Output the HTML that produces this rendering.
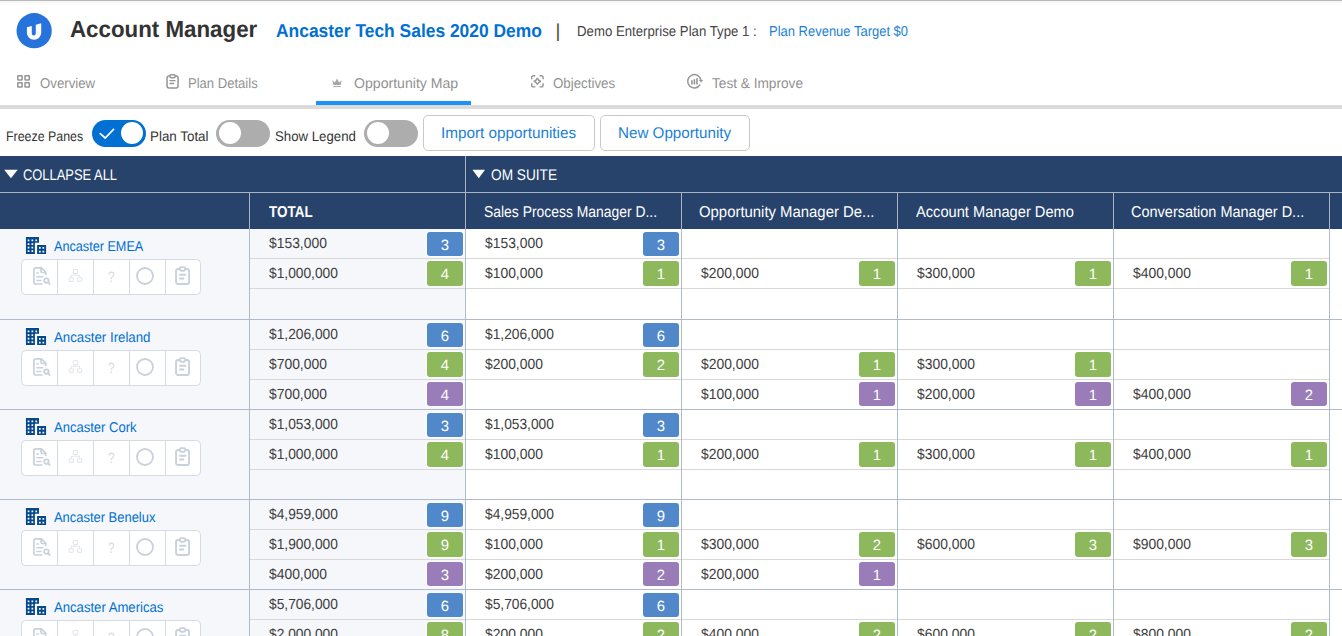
<!DOCTYPE html>
<html lang="en"><head><meta charset="utf-8"><title>Account Manager - Opportunity Map</title>
<style>
html,body{margin:0;padding:0}
body{width:1342px;height:636px;overflow:hidden;background:#fff;font-family:"Liberation Sans",sans-serif;position:relative;color:#333;text-rendering:geometricPrecision}
.t{position:absolute;white-space:nowrap;line-height:1;display:block;transform-origin:0 0}
.a{position:absolute;display:block}
svg{position:absolute;display:block;overflow:visible}
.tog{position:absolute;width:54px;height:27px;border-radius:14px;top:119.9px}
.tog i{position:absolute;display:block;width:22.2px;height:22.2px;border-radius:12px;background:#fff;top:1.9px}
.btn{position:absolute;top:115px;height:34px;border:1px solid #c9c9c9;border-radius:5px;background:#fff}
.hl{position:absolute;height:1px;background:#d8d8d8}
.gl{position:absolute;height:1px;background:#b0bac9;left:0;width:1342px}
.vl{position:absolute;width:1px;background:#b0bac9}
.bd{position:absolute;width:36px;height:24px;border-radius:3px;color:#fff;font-size:14.9px;line-height:28px;text-align:center;box-shadow:0 0 0 1px rgba(255,255,255,.7)}
.b1{background:#5088ca}.b2{background:#8db85c}.b3{background:#9a7cb8}
.bg{position:absolute;left:21px;width:178px;height:34px;border:1px solid #d5dbe5;border-radius:4.5px;background:#fff}
.bg b{position:absolute;top:0;width:1px;height:34px;background:#d5dbe5}
</style></head><body>

<div class="a" style="left:0;top:0;width:1342px;height:5px;background:linear-gradient(#f1f1f1,#fff)"></div>
<div class="a" style="left:0;top:0;width:1342px;height:1px;background:#b9b9b9"></div>
<svg style="left:16px;top:13px" width="37" height="36" viewBox="0 0 37 36"><g transform="translate(0.5,0.05)"><circle cx="17.65" cy="17.65" r="17.65" fill="#2673dc"/><path d="M10.4 14.3L15.3 12.9V20.4A2 2 0 0 0 19.3 20.4V11.75L24.7 10.2V19.6A7.15 7.15 0 0 1 10.4 19.6Z" fill="#fff"/></g></svg>
<span class="t" style="left:69.84px;top:16px;font-size:23.40px;line-height:26px;color:#333;transform:scaleX(0.9540);font-weight:bold;">Account Manager</span>
<span class="t" style="left:276.26px;top:20px;font-size:18.60px;line-height:21px;color:#0070d2;transform:scaleX(0.9367);font-weight:bold;">Ancaster Tech Sales 2020 Demo</span>
<span class="t" style="left:555.4px;top:20px;font-size:18.8px;line-height:21px;color:#4a4a4a">|</span>
<span class="t" style="left:576.94px;top:24px;font-size:14.40px;line-height:16px;color:#444;transform:scaleX(0.9183);">Demo Enterprise Plan Type 1 :</span>
<span class="t" style="left:768.76px;top:24px;font-size:14.40px;line-height:16px;color:#1b7fd6;transform:scaleX(0.9021);">Plan Revenue Target $0</span>
<span class="t" style="left:39.60px;top:76px;font-size:14.20px;line-height:16px;color:#919191;transform:scaleX(0.9321);">Overview</span>
<span class="t" style="left:187.85px;top:76px;font-size:14.20px;line-height:16px;color:#919191;transform:scaleX(0.9201);">Plan Details</span>
<span class="t" style="left:353.87px;top:76px;font-size:14.20px;line-height:16px;color:#919191;transform:scaleX(0.9936);">Opportunity Map</span>
<span class="t" style="left:553.30px;top:76px;font-size:14.20px;line-height:16px;color:#919191;transform:scaleX(0.9379);">Objectives</span>
<span class="t" style="left:711.83px;top:76px;font-size:14.20px;line-height:16px;color:#919191;transform:scaleX(0.9617);">Test &amp; Improve</span>
<div class="a" style="left:0;top:105px;width:1342px;height:3.5px;background:#dddbda"></div>
<div class="a" style="left:316px;top:101px;width:155px;height:4px;background:#1b92f8"></div>
<svg style="left:17px;top:74px" width="15" height="15" viewBox="0 0 15 15" fill="none" stroke="#959595" stroke-width="1.5"><g transform="translate(0.05,0.95)"><rect x="0.75" y="0.75" width="4.3" height="4.3" rx="0.4"/><rect x="7.95" y="0.75" width="4.3" height="4.3" rx="0.4"/><rect x="0.75" y="7.85" width="4.3" height="4.3" rx="0.4"/><rect x="7.95" y="7.85" width="4.3" height="4.3" rx="0.4"/></g></svg>
<svg style="left:166px;top:73px" width="14" height="17" viewBox="0 0 14 17" fill="none" stroke="#959595" stroke-width="1.5"><g transform="translate(0.30,0.90)"><rect x="0.75" y="2.1" width="11" height="12.1" rx="2"/><rect x="3.6" y="0.75" width="5.3" height="3" rx="1.3" fill="#fff"/><path d="M3.2 6.7h6M3.2 9.6h4.6" stroke-width="1.3"/></g></svg>
<svg style="left:331px;top:78px" width="13" height="11" viewBox="0 0 13 11"><g transform="translate(0.90,0.00)"><path d="M1.4 6.9L0.4 2.2L3 4.5L5.1 0.5L7.2 4.5L9.8 2.2L8.8 6.9Z" fill="#a6a6a6"/><path d="M1.4 8.5h7.4" stroke="#a2a2a2" stroke-width="0.9" fill="none"/></g></svg>
<svg style="left:531px;top:75px" width="14" height="14" viewBox="0 0 14 14" fill="none" stroke="#959595" stroke-width="1.4"><g transform="translate(0.00,0.00)"><path d="M0.7 4.3V2.7Q0.7 0.7 2.7 0.7H4.3M8.5 0.7H10.1Q12.1 0.7 12.1 2.7V4.3M12.1 8.3V9.9Q12.1 11.9 10.1 11.9H8.5M4.3 11.9H2.7Q0.7 11.9 0.7 9.9V8.3"/><path d="M6.4 3Q7 5.6 9.9 6.3Q7 7 6.4 9.6Q5.7 7 2.8 6.3Q5.7 5.6 6.4 3Z" stroke-width="1.3"/></g></svg>
<svg style="left:687px;top:74px" width="18" height="16" viewBox="0 0 18 16" fill="none" stroke="#959595" stroke-width="1.5"><g transform="translate(0.00,0.00)"><path d="M13.9 6.2A6.65 6.65 0 1 0 13.1 10.6"/><path d="M11.9 6H16.2L14 8.6Z" fill="#959595" stroke="none"/><path d="M4.9 10.6V6.3M7.4 10.6V5.3M10 10.6V4.3" stroke-width="1.6"/></g></svg>
<span class="t" style="left:5.71px;top:128px;font-size:14.00px;line-height:16px;color:#333;transform:scaleX(0.8850);">Freeze Panes</span>
<span class="t" style="left:149.73px;top:128px;font-size:14.00px;line-height:16px;color:#333;transform:scaleX(0.9558);">Plan Total</span>
<span class="t" style="left:275.01px;top:128px;font-size:14.00px;line-height:16px;color:#333;transform:scaleX(0.9441);">Show Legend</span>
<div class="tog" style="left:92px;background:#0070d2"><i style="left:28.9px"></i><svg style="left:0;top:0" width="54" height="27" viewBox="0 0 54 27" fill="none" stroke="#fff" stroke-width="1.7"><path d="M7.7 13.1L13.2 18L22 8.9"/></svg></div>
<div class="tog" style="left:216px;background:#adadad"><i style="left:2.7px"></i></div>
<div class="tog" style="left:364px;background:#adadad"><i style="left:2.7px"></i></div>
<div class="btn" style="left:423px;width:170px"></div>
<div class="btn" style="left:600px;width:148px"></div>
<span class="t" style="left:441.42px;top:125px;font-size:15.50px;line-height:17px;color:#1b7fd6;transform:scaleX(0.9863);">Import opportunities</span>
<span class="t" style="left:617.98px;top:125px;font-size:15.50px;line-height:17px;color:#1b7fd6;transform:scaleX(0.9799);">New Opportunity</span>
<div class="a" style="left:0;top:156px;width:1342px;height:73px;background:#27436b"></div>
<div class="a" style="left:0;top:192px;width:1342px;height:1px;background:#a9b4c4"></div>
<div class="a" style="left:465px;top:156px;width:1px;height:73px;background:#a9b4c4"></div>
<div class="a" style="left:249px;top:192px;width:1px;height:37px;background:#a9b4c4"></div>
<div class="a" style="left:681px;top:192px;width:1px;height:37px;background:#a9b4c4"></div>
<div class="a" style="left:897px;top:192px;width:1px;height:37px;background:#a9b4c4"></div>
<div class="a" style="left:1113px;top:192px;width:1px;height:37px;background:#a9b4c4"></div>
<div class="a" style="left:1329px;top:192px;width:1px;height:37px;background:#a9b4c4"></div>
<svg style="left:4px;top:169px" width="15" height="11" viewBox="0 0 15 11"><g transform="translate(0.20,0.80)"><path d="M0 0H13.5L6.75 8.5Z" fill="#fff"/></g></svg>
<svg style="left:472px;top:169px" width="14" height="11" viewBox="0 0 14 11"><g transform="translate(0.50,0.80)"><path d="M0 0H12.5L6.25 8.5Z" fill="#fff"/></g></svg>
<span class="t" style="left:23.15px;top:167px;font-size:15.40px;line-height:17px;color:#fff;transform:scaleX(0.8387);">COLLAPSE ALL</span>
<span class="t" style="left:490.68px;top:167px;font-size:15.40px;line-height:17px;color:#fff;transform:scaleX(0.8877);">OM SUITE</span>
<span class="t" style="left:268.77px;top:204px;font-size:15.80px;line-height:17px;color:#fff;transform:scaleX(0.8518);font-weight:bold;">TOTAL</span>
<span class="t" style="left:483.87px;top:204px;font-size:15.70px;line-height:17px;color:#fff;transform:scaleX(0.8860);">Sales Process Manager D...</span>
<span class="t" style="left:699.33px;top:204px;font-size:15.70px;line-height:17px;color:#fff;transform:scaleX(0.9491);">Opportunity Manager De...</span>
<span class="t" style="left:916.00px;top:204px;font-size:15.70px;line-height:17px;color:#fff;transform:scaleX(0.9333);">Account Manager Demo</span>
<span class="t" style="left:1131.27px;top:204px;font-size:15.70px;line-height:17px;color:#fff;transform:scaleX(0.9239);">Conversation Manager D...</span>
<div class="a" style="left:0;top:229px;width:465px;height:407px;background:#f5f7fb"></div>
<svg style="left:25px;top:237px" width="23" height="18" viewBox="0 0 23 18"><g transform="translate(0.90,0.10)"><path fill="#05488c" stroke="#fff" stroke-width="1.6" stroke-linejoin="round" d="M0 0H13.1V5.7H9V16.8H0Z M11.2 8H20.2V16.8H11.2Z"/><path fill="#05488c" d="M0 0H13.1V5.7H9V16.8H0Z M11.2 8H20.2V16.8H11.2Z"/><path fill="#fff" d="M1.8 2.5h1.7v1.7H1.8Z M5.6 2.5h1.7v1.7H5.6Z M9.5 2.5h1.7v1.7H9.5Z M1.8 6.1h1.7v1.7H1.8Z M5.6 6.1h1.7v1.7H5.6Z M1.8 9.6h1.7v1.7H1.8Z M5.6 9.6h1.7v1.7H5.6Z M1.8 13.2h1.7v1.7H1.8Z M5.6 13.2h1.7v1.7H5.6Z M13.1 10h1.7v1.7h-1.7Z M16.6 10h1.7v1.7h-1.7Z M13.1 13.6h1.7v1.7h-1.7Z M16.6 13.6h1.7v1.7h-1.7Z"/></g></svg>
<span class="t" style="left:53.50px;top:239px;font-size:14.20px;line-height:16px;color:#0070d2;transform:scaleX(0.8914);">Ancaster EMEA</span>
<div class="bg" style="top:259px"><b style="left:35px"></b><b style="left:71px"></b><b style="left:107px"></b><b style="left:143px"></b><svg style="left:11px;top:6px" width="19" height="20" viewBox="0 0 19 20" fill="none" stroke="#c9d1dc" stroke-width="1.7" stroke-linecap="round" stroke-linejoin="round"><g transform="translate(0.00,0.90)"><path d="M12.7 7.6V5.2L8.4 0.9H2.7Q0.9 0.9 0.9 2.7V15.3Q0.9 17.1 2.7 17.1H8.8"/><path d="M8 1.2V4.2Q8 5.6 9.4 5.6H12.4"/><path d="M3.9 6.2h1.4M3.9 9.8h5.9M3.9 13.5h4.1" stroke-width="1.5"/><circle cx="13.4" cy="13.7" r="2.3"/><path d="M15.2 15.5L16.7 17.2"/></g></svg><svg style="left:46px;top:9px" width="16" height="14" viewBox="0 0 16 14" fill="none" stroke="#e4e7eb" stroke-width="1.1"><g transform="translate(0.60,0.00)"><rect x="4.6" y="0.55" width="4.4" height="4" rx="0.8"/><rect x="0.55" y="8.7" width="4.2" height="3.7" rx="0.8"/><rect x="8.85" y="8.7" width="4.2" height="3.7" rx="0.8"/><path d="M6.8 4.6V6.3M2.65 8.7V6.3H10.95V8.7"/></g></svg><span class="t" style="left:85.93px;top:9px;font-size:15.00px;line-height:17px;color:#dadada;transform:scaleX(0.7778);">?</span><svg style="left:114px;top:7px" width="19" height="19" viewBox="0 0 19 19" fill="none" stroke="#c9d1dc" stroke-width="1.8"><g transform="translate(0.10,0.10)"><circle cx="8.9" cy="8.9" r="8"/></g></svg><svg style="left:153px;top:6px" width="16" height="20" viewBox="0 0 16 20" fill="none" stroke="#c9d1dc" stroke-width="1.9" stroke-linejoin="round"><g transform="translate(0.10,0.20)"><rect x="0.95" y="2.8" width="13" height="15" rx="2"/><rect x="4.8" y="0.9" width="5.3" height="3.6" rx="1.2" fill="#fff"/><path d="M4.1 8.6h7M4.1 12.3h5" stroke-linecap="butt"/></g></svg></div>
<div class="hl" style="left:250px;top:258px;width:1079px"></div>
<span class="t" style="left:268.66px;top:236px;font-size:14.70px;line-height:16px;color:#3d3d3d;transform:scaleX(0.9448);">$153,000</span>
<span class="bd b1" style="left:427px;top:232px;height:24px">3</span>
<span class="t" style="left:484.66px;top:236px;font-size:14.70px;line-height:16px;color:#3d3d3d;transform:scaleX(0.9448);">$153,000</span>
<span class="bd b1" style="left:643px;top:232px;height:24px">3</span>
<div class="hl" style="left:250px;top:288px;width:1079px"></div>
<span class="t" style="left:268.66px;top:266px;font-size:14.70px;line-height:16px;color:#3d3d3d;transform:scaleX(0.9374);">$1,000,000</span>
<span class="bd b2" style="left:427px;top:261px;height:25px">4</span>
<span class="t" style="left:484.66px;top:266px;font-size:14.70px;line-height:16px;color:#3d3d3d;transform:scaleX(0.9448);">$100,000</span>
<span class="bd b2" style="left:643px;top:261px;height:25px">1</span>
<span class="t" style="left:700.66px;top:266px;font-size:14.70px;line-height:16px;color:#3d3d3d;transform:scaleX(0.9448);">$200,000</span>
<span class="bd b2" style="left:859px;top:261px;height:25px">1</span>
<span class="t" style="left:916.66px;top:266px;font-size:14.70px;line-height:16px;color:#3d3d3d;transform:scaleX(0.9448);">$300,000</span>
<span class="bd b2" style="left:1075px;top:261px;height:25px">1</span>
<span class="t" style="left:1132.66px;top:266px;font-size:14.70px;line-height:16px;color:#3d3d3d;transform:scaleX(0.9448);">$400,000</span>
<span class="bd b2" style="left:1291px;top:261px;height:25px">1</span>
<div class="gl" style="top:319px"></div>
<svg style="left:25px;top:328px" width="23" height="18" viewBox="0 0 23 18"><g transform="translate(0.90,0.10)"><path fill="#05488c" stroke="#fff" stroke-width="1.6" stroke-linejoin="round" d="M0 0H13.1V5.7H9V16.8H0Z M11.2 8H20.2V16.8H11.2Z"/><path fill="#05488c" d="M0 0H13.1V5.7H9V16.8H0Z M11.2 8H20.2V16.8H11.2Z"/><path fill="#fff" d="M1.8 2.5h1.7v1.7H1.8Z M5.6 2.5h1.7v1.7H5.6Z M9.5 2.5h1.7v1.7H9.5Z M1.8 6.1h1.7v1.7H1.8Z M5.6 6.1h1.7v1.7H5.6Z M1.8 9.6h1.7v1.7H1.8Z M5.6 9.6h1.7v1.7H5.6Z M1.8 13.2h1.7v1.7H1.8Z M5.6 13.2h1.7v1.7H5.6Z M13.1 10h1.7v1.7h-1.7Z M16.6 10h1.7v1.7h-1.7Z M13.1 13.6h1.7v1.7h-1.7Z M16.6 13.6h1.7v1.7h-1.7Z"/></g></svg>
<span class="t" style="left:53.50px;top:330px;font-size:14.20px;line-height:16px;color:#0070d2;transform:scaleX(0.9338);">Ancaster Ireland</span>
<div class="bg" style="top:350px"><b style="left:35px"></b><b style="left:71px"></b><b style="left:107px"></b><b style="left:143px"></b><svg style="left:11px;top:6px" width="19" height="20" viewBox="0 0 19 20" fill="none" stroke="#c9d1dc" stroke-width="1.7" stroke-linecap="round" stroke-linejoin="round"><g transform="translate(0.00,0.90)"><path d="M12.7 7.6V5.2L8.4 0.9H2.7Q0.9 0.9 0.9 2.7V15.3Q0.9 17.1 2.7 17.1H8.8"/><path d="M8 1.2V4.2Q8 5.6 9.4 5.6H12.4"/><path d="M3.9 6.2h1.4M3.9 9.8h5.9M3.9 13.5h4.1" stroke-width="1.5"/><circle cx="13.4" cy="13.7" r="2.3"/><path d="M15.2 15.5L16.7 17.2"/></g></svg><svg style="left:46px;top:9px" width="16" height="14" viewBox="0 0 16 14" fill="none" stroke="#e4e7eb" stroke-width="1.1"><g transform="translate(0.60,0.00)"><rect x="4.6" y="0.55" width="4.4" height="4" rx="0.8"/><rect x="0.55" y="8.7" width="4.2" height="3.7" rx="0.8"/><rect x="8.85" y="8.7" width="4.2" height="3.7" rx="0.8"/><path d="M6.8 4.6V6.3M2.65 8.7V6.3H10.95V8.7"/></g></svg><span class="t" style="left:85.93px;top:9px;font-size:15.00px;line-height:17px;color:#dadada;transform:scaleX(0.7778);">?</span><svg style="left:114px;top:7px" width="19" height="19" viewBox="0 0 19 19" fill="none" stroke="#c9d1dc" stroke-width="1.8"><g transform="translate(0.10,0.10)"><circle cx="8.9" cy="8.9" r="8"/></g></svg><svg style="left:153px;top:6px" width="16" height="20" viewBox="0 0 16 20" fill="none" stroke="#c9d1dc" stroke-width="1.9" stroke-linejoin="round"><g transform="translate(0.10,0.20)"><rect x="0.95" y="2.8" width="13" height="15" rx="2"/><rect x="4.8" y="0.9" width="5.3" height="3.6" rx="1.2" fill="#fff"/><path d="M4.1 8.6h7M4.1 12.3h5" stroke-linecap="butt"/></g></svg></div>
<div class="hl" style="left:250px;top:349px;width:1079px"></div>
<span class="t" style="left:268.66px;top:327px;font-size:14.70px;line-height:16px;color:#3d3d3d;transform:scaleX(0.9374);">$1,206,000</span>
<span class="bd b1" style="left:427px;top:323px;height:24px">6</span>
<span class="t" style="left:484.66px;top:327px;font-size:14.70px;line-height:16px;color:#3d3d3d;transform:scaleX(0.9374);">$1,206,000</span>
<span class="bd b1" style="left:643px;top:323px;height:24px">6</span>
<div class="hl" style="left:250px;top:379px;width:1079px"></div>
<span class="t" style="left:268.66px;top:357px;font-size:14.70px;line-height:16px;color:#3d3d3d;transform:scaleX(0.9448);">$700,000</span>
<span class="bd b2" style="left:427px;top:352px;height:25px">4</span>
<span class="t" style="left:484.66px;top:357px;font-size:14.70px;line-height:16px;color:#3d3d3d;transform:scaleX(0.9448);">$200,000</span>
<span class="bd b2" style="left:643px;top:352px;height:25px">2</span>
<span class="t" style="left:700.66px;top:357px;font-size:14.70px;line-height:16px;color:#3d3d3d;transform:scaleX(0.9448);">$200,000</span>
<span class="bd b2" style="left:859px;top:352px;height:25px">1</span>
<span class="t" style="left:916.66px;top:357px;font-size:14.70px;line-height:16px;color:#3d3d3d;transform:scaleX(0.9448);">$300,000</span>
<span class="bd b2" style="left:1075px;top:352px;height:25px">1</span>
<span class="t" style="left:268.66px;top:387px;font-size:14.70px;line-height:16px;color:#3d3d3d;transform:scaleX(0.9448);">$700,000</span>
<span class="bd b3" style="left:427px;top:382px;height:24px">4</span>
<span class="t" style="left:700.66px;top:387px;font-size:14.70px;line-height:16px;color:#3d3d3d;transform:scaleX(0.9448);">$100,000</span>
<span class="bd b3" style="left:859px;top:382px;height:24px">1</span>
<span class="t" style="left:916.66px;top:387px;font-size:14.70px;line-height:16px;color:#3d3d3d;transform:scaleX(0.9448);">$200,000</span>
<span class="bd b3" style="left:1075px;top:382px;height:24px">1</span>
<span class="t" style="left:1132.66px;top:387px;font-size:14.70px;line-height:16px;color:#3d3d3d;transform:scaleX(0.9448);">$400,000</span>
<span class="bd b3" style="left:1291px;top:382px;height:24px">2</span>
<div class="gl" style="top:409px"></div>
<svg style="left:25px;top:418px" width="23" height="18" viewBox="0 0 23 18"><g transform="translate(0.90,0.10)"><path fill="#05488c" stroke="#fff" stroke-width="1.6" stroke-linejoin="round" d="M0 0H13.1V5.7H9V16.8H0Z M11.2 8H20.2V16.8H11.2Z"/><path fill="#05488c" d="M0 0H13.1V5.7H9V16.8H0Z M11.2 8H20.2V16.8H11.2Z"/><path fill="#fff" d="M1.8 2.5h1.7v1.7H1.8Z M5.6 2.5h1.7v1.7H5.6Z M9.5 2.5h1.7v1.7H9.5Z M1.8 6.1h1.7v1.7H1.8Z M5.6 6.1h1.7v1.7H5.6Z M1.8 9.6h1.7v1.7H1.8Z M5.6 9.6h1.7v1.7H5.6Z M1.8 13.2h1.7v1.7H1.8Z M5.6 13.2h1.7v1.7H5.6Z M13.1 10h1.7v1.7h-1.7Z M16.6 10h1.7v1.7h-1.7Z M13.1 13.6h1.7v1.7h-1.7Z M16.6 13.6h1.7v1.7h-1.7Z"/></g></svg>
<span class="t" style="left:53.50px;top:420px;font-size:14.20px;line-height:16px;color:#0070d2;transform:scaleX(0.9190);">Ancaster Cork</span>
<div class="bg" style="top:440px"><b style="left:35px"></b><b style="left:71px"></b><b style="left:107px"></b><b style="left:143px"></b><svg style="left:11px;top:6px" width="19" height="20" viewBox="0 0 19 20" fill="none" stroke="#c9d1dc" stroke-width="1.7" stroke-linecap="round" stroke-linejoin="round"><g transform="translate(0.00,0.90)"><path d="M12.7 7.6V5.2L8.4 0.9H2.7Q0.9 0.9 0.9 2.7V15.3Q0.9 17.1 2.7 17.1H8.8"/><path d="M8 1.2V4.2Q8 5.6 9.4 5.6H12.4"/><path d="M3.9 6.2h1.4M3.9 9.8h5.9M3.9 13.5h4.1" stroke-width="1.5"/><circle cx="13.4" cy="13.7" r="2.3"/><path d="M15.2 15.5L16.7 17.2"/></g></svg><svg style="left:46px;top:9px" width="16" height="14" viewBox="0 0 16 14" fill="none" stroke="#e4e7eb" stroke-width="1.1"><g transform="translate(0.60,0.00)"><rect x="4.6" y="0.55" width="4.4" height="4" rx="0.8"/><rect x="0.55" y="8.7" width="4.2" height="3.7" rx="0.8"/><rect x="8.85" y="8.7" width="4.2" height="3.7" rx="0.8"/><path d="M6.8 4.6V6.3M2.65 8.7V6.3H10.95V8.7"/></g></svg><span class="t" style="left:85.93px;top:9px;font-size:15.00px;line-height:17px;color:#dadada;transform:scaleX(0.7778);">?</span><svg style="left:114px;top:7px" width="19" height="19" viewBox="0 0 19 19" fill="none" stroke="#c9d1dc" stroke-width="1.8"><g transform="translate(0.10,0.10)"><circle cx="8.9" cy="8.9" r="8"/></g></svg><svg style="left:153px;top:6px" width="16" height="20" viewBox="0 0 16 20" fill="none" stroke="#c9d1dc" stroke-width="1.9" stroke-linejoin="round"><g transform="translate(0.10,0.20)"><rect x="0.95" y="2.8" width="13" height="15" rx="2"/><rect x="4.8" y="0.9" width="5.3" height="3.6" rx="1.2" fill="#fff"/><path d="M4.1 8.6h7M4.1 12.3h5" stroke-linecap="butt"/></g></svg></div>
<div class="hl" style="left:250px;top:439px;width:1079px"></div>
<span class="t" style="left:268.66px;top:417px;font-size:14.70px;line-height:16px;color:#3d3d3d;transform:scaleX(0.9374);">$1,053,000</span>
<span class="bd b1" style="left:427px;top:413px;height:24px">3</span>
<span class="t" style="left:484.66px;top:417px;font-size:14.70px;line-height:16px;color:#3d3d3d;transform:scaleX(0.9374);">$1,053,000</span>
<span class="bd b1" style="left:643px;top:413px;height:24px">3</span>
<div class="hl" style="left:250px;top:469px;width:1079px"></div>
<span class="t" style="left:268.66px;top:447px;font-size:14.70px;line-height:16px;color:#3d3d3d;transform:scaleX(0.9374);">$1,000,000</span>
<span class="bd b2" style="left:427px;top:442px;height:25px">4</span>
<span class="t" style="left:484.66px;top:447px;font-size:14.70px;line-height:16px;color:#3d3d3d;transform:scaleX(0.9448);">$100,000</span>
<span class="bd b2" style="left:643px;top:442px;height:25px">1</span>
<span class="t" style="left:700.66px;top:447px;font-size:14.70px;line-height:16px;color:#3d3d3d;transform:scaleX(0.9448);">$200,000</span>
<span class="bd b2" style="left:859px;top:442px;height:25px">1</span>
<span class="t" style="left:916.66px;top:447px;font-size:14.70px;line-height:16px;color:#3d3d3d;transform:scaleX(0.9448);">$300,000</span>
<span class="bd b2" style="left:1075px;top:442px;height:25px">1</span>
<span class="t" style="left:1132.66px;top:447px;font-size:14.70px;line-height:16px;color:#3d3d3d;transform:scaleX(0.9448);">$400,000</span>
<span class="bd b2" style="left:1291px;top:442px;height:25px">1</span>
<div class="gl" style="top:499px"></div>
<svg style="left:25px;top:508px" width="23" height="18" viewBox="0 0 23 18"><g transform="translate(0.90,0.10)"><path fill="#05488c" stroke="#fff" stroke-width="1.6" stroke-linejoin="round" d="M0 0H13.1V5.7H9V16.8H0Z M11.2 8H20.2V16.8H11.2Z"/><path fill="#05488c" d="M0 0H13.1V5.7H9V16.8H0Z M11.2 8H20.2V16.8H11.2Z"/><path fill="#fff" d="M1.8 2.5h1.7v1.7H1.8Z M5.6 2.5h1.7v1.7H5.6Z M9.5 2.5h1.7v1.7H9.5Z M1.8 6.1h1.7v1.7H1.8Z M5.6 6.1h1.7v1.7H5.6Z M1.8 9.6h1.7v1.7H1.8Z M5.6 9.6h1.7v1.7H5.6Z M1.8 13.2h1.7v1.7H1.8Z M5.6 13.2h1.7v1.7H5.6Z M13.1 10h1.7v1.7h-1.7Z M16.6 10h1.7v1.7h-1.7Z M13.1 13.6h1.7v1.7h-1.7Z M16.6 13.6h1.7v1.7h-1.7Z"/></g></svg>
<span class="t" style="left:53.50px;top:510px;font-size:14.20px;line-height:16px;color:#0070d2;transform:scaleX(0.9114);">Ancaster Benelux</span>
<div class="bg" style="top:530px"><b style="left:35px"></b><b style="left:71px"></b><b style="left:107px"></b><b style="left:143px"></b><svg style="left:11px;top:6px" width="19" height="20" viewBox="0 0 19 20" fill="none" stroke="#c9d1dc" stroke-width="1.7" stroke-linecap="round" stroke-linejoin="round"><g transform="translate(0.00,0.90)"><path d="M12.7 7.6V5.2L8.4 0.9H2.7Q0.9 0.9 0.9 2.7V15.3Q0.9 17.1 2.7 17.1H8.8"/><path d="M8 1.2V4.2Q8 5.6 9.4 5.6H12.4"/><path d="M3.9 6.2h1.4M3.9 9.8h5.9M3.9 13.5h4.1" stroke-width="1.5"/><circle cx="13.4" cy="13.7" r="2.3"/><path d="M15.2 15.5L16.7 17.2"/></g></svg><svg style="left:46px;top:9px" width="16" height="14" viewBox="0 0 16 14" fill="none" stroke="#e4e7eb" stroke-width="1.1"><g transform="translate(0.60,0.00)"><rect x="4.6" y="0.55" width="4.4" height="4" rx="0.8"/><rect x="0.55" y="8.7" width="4.2" height="3.7" rx="0.8"/><rect x="8.85" y="8.7" width="4.2" height="3.7" rx="0.8"/><path d="M6.8 4.6V6.3M2.65 8.7V6.3H10.95V8.7"/></g></svg><span class="t" style="left:85.93px;top:9px;font-size:15.00px;line-height:17px;color:#dadada;transform:scaleX(0.7778);">?</span><svg style="left:114px;top:7px" width="19" height="19" viewBox="0 0 19 19" fill="none" stroke="#c9d1dc" stroke-width="1.8"><g transform="translate(0.10,0.10)"><circle cx="8.9" cy="8.9" r="8"/></g></svg><svg style="left:153px;top:6px" width="16" height="20" viewBox="0 0 16 20" fill="none" stroke="#c9d1dc" stroke-width="1.9" stroke-linejoin="round"><g transform="translate(0.10,0.20)"><rect x="0.95" y="2.8" width="13" height="15" rx="2"/><rect x="4.8" y="0.9" width="5.3" height="3.6" rx="1.2" fill="#fff"/><path d="M4.1 8.6h7M4.1 12.3h5" stroke-linecap="butt"/></g></svg></div>
<div class="hl" style="left:250px;top:529px;width:1079px"></div>
<span class="t" style="left:268.66px;top:507px;font-size:14.70px;line-height:16px;color:#3d3d3d;transform:scaleX(0.9374);">$4,959,000</span>
<span class="bd b1" style="left:427px;top:503px;height:24px">9</span>
<span class="t" style="left:484.66px;top:507px;font-size:14.70px;line-height:16px;color:#3d3d3d;transform:scaleX(0.9374);">$4,959,000</span>
<span class="bd b1" style="left:643px;top:503px;height:24px">9</span>
<div class="hl" style="left:250px;top:559px;width:1079px"></div>
<span class="t" style="left:268.66px;top:537px;font-size:14.70px;line-height:16px;color:#3d3d3d;transform:scaleX(0.9374);">$1,900,000</span>
<span class="bd b2" style="left:427px;top:532px;height:25px">9</span>
<span class="t" style="left:484.66px;top:537px;font-size:14.70px;line-height:16px;color:#3d3d3d;transform:scaleX(0.9448);">$100,000</span>
<span class="bd b2" style="left:643px;top:532px;height:25px">1</span>
<span class="t" style="left:700.66px;top:537px;font-size:14.70px;line-height:16px;color:#3d3d3d;transform:scaleX(0.9448);">$300,000</span>
<span class="bd b2" style="left:859px;top:532px;height:25px">2</span>
<span class="t" style="left:916.66px;top:537px;font-size:14.70px;line-height:16px;color:#3d3d3d;transform:scaleX(0.9448);">$600,000</span>
<span class="bd b2" style="left:1075px;top:532px;height:25px">3</span>
<span class="t" style="left:1132.66px;top:537px;font-size:14.70px;line-height:16px;color:#3d3d3d;transform:scaleX(0.9448);">$900,000</span>
<span class="bd b2" style="left:1291px;top:532px;height:25px">3</span>
<span class="t" style="left:268.66px;top:567px;font-size:14.70px;line-height:16px;color:#3d3d3d;transform:scaleX(0.9448);">$400,000</span>
<span class="bd b3" style="left:427px;top:562px;height:24px">3</span>
<span class="t" style="left:484.66px;top:567px;font-size:14.70px;line-height:16px;color:#3d3d3d;transform:scaleX(0.9448);">$200,000</span>
<span class="bd b3" style="left:643px;top:562px;height:24px">2</span>
<span class="t" style="left:700.66px;top:567px;font-size:14.70px;line-height:16px;color:#3d3d3d;transform:scaleX(0.9448);">$200,000</span>
<span class="bd b3" style="left:859px;top:562px;height:24px">1</span>
<div class="gl" style="top:589px"></div>
<svg style="left:25px;top:598px" width="23" height="18" viewBox="0 0 23 18"><g transform="translate(0.90,0.10)"><path fill="#05488c" stroke="#fff" stroke-width="1.6" stroke-linejoin="round" d="M0 0H13.1V5.7H9V16.8H0Z M11.2 8H20.2V16.8H11.2Z"/><path fill="#05488c" d="M0 0H13.1V5.7H9V16.8H0Z M11.2 8H20.2V16.8H11.2Z"/><path fill="#fff" d="M1.8 2.5h1.7v1.7H1.8Z M5.6 2.5h1.7v1.7H5.6Z M9.5 2.5h1.7v1.7H9.5Z M1.8 6.1h1.7v1.7H1.8Z M5.6 6.1h1.7v1.7H5.6Z M1.8 9.6h1.7v1.7H1.8Z M5.6 9.6h1.7v1.7H5.6Z M1.8 13.2h1.7v1.7H1.8Z M5.6 13.2h1.7v1.7H5.6Z M13.1 10h1.7v1.7h-1.7Z M16.6 10h1.7v1.7h-1.7Z M13.1 13.6h1.7v1.7h-1.7Z M16.6 13.6h1.7v1.7h-1.7Z"/></g></svg>
<span class="t" style="left:53.50px;top:600px;font-size:14.20px;line-height:16px;color:#0070d2;transform:scaleX(0.9245);">Ancaster Americas</span>
<div class="bg" style="top:620px"><b style="left:35px"></b><b style="left:71px"></b><b style="left:107px"></b><b style="left:143px"></b><svg style="left:11px;top:6px" width="19" height="20" viewBox="0 0 19 20" fill="none" stroke="#c9d1dc" stroke-width="1.7" stroke-linecap="round" stroke-linejoin="round"><g transform="translate(0.00,0.90)"><path d="M12.7 7.6V5.2L8.4 0.9H2.7Q0.9 0.9 0.9 2.7V15.3Q0.9 17.1 2.7 17.1H8.8"/><path d="M8 1.2V4.2Q8 5.6 9.4 5.6H12.4"/><path d="M3.9 6.2h1.4M3.9 9.8h5.9M3.9 13.5h4.1" stroke-width="1.5"/><circle cx="13.4" cy="13.7" r="2.3"/><path d="M15.2 15.5L16.7 17.2"/></g></svg><svg style="left:46px;top:9px" width="16" height="14" viewBox="0 0 16 14" fill="none" stroke="#e4e7eb" stroke-width="1.1"><g transform="translate(0.60,0.00)"><rect x="4.6" y="0.55" width="4.4" height="4" rx="0.8"/><rect x="0.55" y="8.7" width="4.2" height="3.7" rx="0.8"/><rect x="8.85" y="8.7" width="4.2" height="3.7" rx="0.8"/><path d="M6.8 4.6V6.3M2.65 8.7V6.3H10.95V8.7"/></g></svg><span class="t" style="left:85.93px;top:9px;font-size:15.00px;line-height:17px;color:#dadada;transform:scaleX(0.7778);">?</span><svg style="left:114px;top:7px" width="19" height="19" viewBox="0 0 19 19" fill="none" stroke="#c9d1dc" stroke-width="1.8"><g transform="translate(0.10,0.10)"><circle cx="8.9" cy="8.9" r="8"/></g></svg><svg style="left:153px;top:6px" width="16" height="20" viewBox="0 0 16 20" fill="none" stroke="#c9d1dc" stroke-width="1.9" stroke-linejoin="round"><g transform="translate(0.10,0.20)"><rect x="0.95" y="2.8" width="13" height="15" rx="2"/><rect x="4.8" y="0.9" width="5.3" height="3.6" rx="1.2" fill="#fff"/><path d="M4.1 8.6h7M4.1 12.3h5" stroke-linecap="butt"/></g></svg></div>
<div class="hl" style="left:250px;top:619px;width:1079px"></div>
<span class="t" style="left:268.66px;top:597px;font-size:14.70px;line-height:16px;color:#3d3d3d;transform:scaleX(0.9374);">$5,706,000</span>
<span class="bd b1" style="left:427px;top:593px;height:24px">6</span>
<span class="t" style="left:484.66px;top:597px;font-size:14.70px;line-height:16px;color:#3d3d3d;transform:scaleX(0.9374);">$5,706,000</span>
<span class="bd b1" style="left:643px;top:593px;height:24px">6</span>
<div class="hl" style="left:250px;top:649px;width:1079px"></div>
<span class="t" style="left:268.66px;top:627px;font-size:14.70px;line-height:16px;color:#3d3d3d;transform:scaleX(0.9374);">$2,000,000</span>
<span class="bd b2" style="left:427px;top:622px;height:25px">8</span>
<span class="t" style="left:484.66px;top:627px;font-size:14.70px;line-height:16px;color:#3d3d3d;transform:scaleX(0.9448);">$200,000</span>
<span class="bd b2" style="left:643px;top:622px;height:25px">2</span>
<span class="t" style="left:700.66px;top:627px;font-size:14.70px;line-height:16px;color:#3d3d3d;transform:scaleX(0.9448);">$400,000</span>
<span class="bd b2" style="left:859px;top:622px;height:25px">2</span>
<span class="t" style="left:916.66px;top:627px;font-size:14.70px;line-height:16px;color:#3d3d3d;transform:scaleX(0.9448);">$600,000</span>
<span class="bd b2" style="left:1075px;top:622px;height:25px">2</span>
<span class="t" style="left:1132.66px;top:627px;font-size:14.70px;line-height:16px;color:#3d3d3d;transform:scaleX(0.9448);">$800,000</span>
<span class="bd b2" style="left:1291px;top:622px;height:25px">2</span>
<div class="gl" style="top:679px"></div>
<div class="vl" style="left:249px;top:229px;height:407px"></div>
<div class="vl" style="left:465px;top:229px;height:407px"></div>
<div class="vl" style="left:681px;top:229px;height:407px"></div>
<div class="vl" style="left:897px;top:229px;height:407px"></div>
<div class="vl" style="left:1113px;top:229px;height:407px"></div>
<div class="vl" style="left:1329px;top:229px;height:407px"></div>
</body></html>
